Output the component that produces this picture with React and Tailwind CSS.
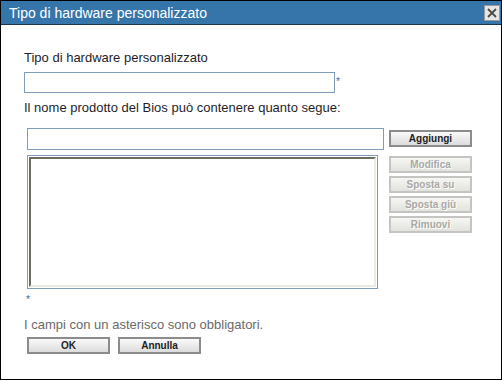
export default function App() {
  const font = { fontFamily: '"Liberation Sans", Arial, sans-serif' };
  const btn =
    "h-[17px] w-[83px] border-2 border-[#8c8c8c] bg-gradient-to-b from-[#fafafa] to-[#dcdcdc] text-[10px] font-bold leading-[13px] text-[#222]";
  const btnOff =
    "h-[17px] w-[83px] border-2 border-[#c4c4c0] bg-gradient-to-b from-[#f6f6f4] to-[#e2e2de] text-[10px] font-bold leading-[13px] text-[#a9a9a4] [text-shadow:1px_1px_0_#fff]";

  return (
    <div className="w-[502px] h-[381px] bg-white" style={font}>
      <div className="w-[502px] h-[380px] border border-black flex flex-col">
        <div className="h-[24px] bg-[#3575a9] border-b border-[#1d3550] flex items-center justify-between pl-[8px] pr-[1px]">
          <span className="text-white text-[14px] leading-none">Tipo di hardware personalizzato</span>
          <button className="w-[16px] h-[16px] bg-[#e6e6e6] border border-[#9a9a9a] flex items-center justify-center">
            <svg width="10" height="10" viewBox="0 0 10 10">
              <path d="M1 1L9 9M9 1L1 9" stroke="#4a4a4a" strokeWidth="1.8" />
            </svg>
          </button>
        </div>

        <div className="pl-[23px] flex flex-col">
          <div className="mt-[25px] text-[13px] leading-[16px] text-[#1e1e2a]">Tipo di hardware personalizzato</div>
          <div className="mt-[6px] flex items-start">
            <input className="w-[311px] h-[21px] border border-[#7f9db9] outline-none" />
            <span className="ml-[1px] mt-[5px] text-[10px] leading-none text-[#3366cc]">*</span>
          </div>
          <div className="mt-[7px] text-[13px] leading-[16px] text-[#1e1e2a]">
            Il nome prodotto del Bios può contenere quanto segue:
          </div>

          <div className="mt-[12px] ml-[3px] flex items-start gap-[5px]">
            <div className="flex flex-col">
              <input className="w-[357px] h-[22px] border border-[#7f9db9] outline-none" />
              <div className="mt-[5px] w-[351px] h-[134px] border border-[#7f9db9] p-px">
                <div className="w-full h-full border-2 border-t-[#6c6c62] border-l-[#6c6c62] border-b-[#ecebe0] border-r-[#ecebe0] bg-white" />
              </div>
            </div>
            <div className="flex flex-col">
              <button className={"mt-[2px] " + btn}>Aggiungi</button>
              <div className="mt-[9px] flex flex-col gap-[3px]">
                <button className={btnOff}>Modifica</button>
                <button className={btnOff}>Sposta su</button>
                <button className={btnOff}>Sposta giù</button>
                <button className={btnOff}>Rimuovi</button>
              </div>
            </div>
          </div>

          <div className="mt-[6px] ml-[2px] text-[10px] leading-[10px] text-[#3366cc]">*</div>
          <div className="mt-[12px] text-[13px] leading-[16px] text-[#6a6a6a]">I campi con un asterisco sono obbligatori.</div>
          <div className="mt-[4px] ml-[3px] flex gap-[8px]">
            <button className={btn + " h-[16px] leading-[12px]"}>OK</button>
            <button className={btn + " h-[16px] leading-[12px]"}>Annulla</button>
          </div>
        </div>
      </div>
    </div>
  );
}
